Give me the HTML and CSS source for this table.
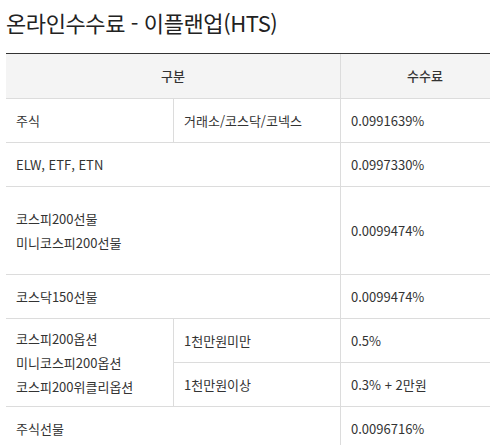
FILE: index.html
```html
<!DOCTYPE html>
<html lang="ko">
<head>
<meta charset="utf-8">
<title>온라인수수료 - 이플랜업(HTS)</title>
<link rel="stylesheet" href="styles.css">
</head>
<body>
<div class="page">
  <h1 class="title">온라인수수료 - 이플랜업(HTS)</h1>
  <div class="fee-table">
    <div class="th span2">구분</div>
    <div class="th last">수수료</div>

    <div class="td">주식</div>
    <div class="td">거래소/코스닥/코넥스</div>
    <div class="td last">0.0991639%</div>

    <div class="td span2">ELW, ETF, ETN</div>
    <div class="td last">0.0997330%</div>

    <div class="td span2 tall">코스피200선물<br>미니코스피200선물</div>
    <div class="td last tall">0.0099474%</div>

    <div class="td span2">코스닥150선물</div>
    <div class="td last">0.0099474%</div>

    <div class="td rows2">코스피200옵션<br>미니코스피200옵션<br>코스피200위클리옵션</div>
    <div class="td">1천만원미만</div>
    <div class="td last">0.5%</div>
    <div class="td">1천만원이상</div>
    <div class="td last">0.3% + 2만원</div>

    <div class="td span2">주식선물</div>
    <div class="td last">0.0096716%</div>
  </div>
</div>
</body>
</html>
```

FILE: styles.css
```css
html, body {
  margin: 0;
  padding: 0;
  background: #fff;
  overflow: hidden;
}

body {
  font-family: "Noto Sans CJK KR", "Noto Sans", sans-serif;
  color: #333;
}

.page {
  padding: 0 0 0 6px;
}

.title {
  margin: 0;
  padding: 7px 0 0;
  height: 46px;
  box-sizing: border-box;
  font-size: 22px;
  line-height: 30px;
  font-weight: 400;
  color: #222;
  letter-spacing: -0.4px;
}

.fee-table {
  display: grid;
  grid-template-columns: 168px 167px 168px;
  grid-template-rows: 45px 44px 44px 88px 44px 44px 44px 44px;
  width: 503px;
  border-top: 1px solid #333;
  margin-top: 7px;
  font-size: 13px;
  line-height: 24px;
}

.th,
.td {
  display: flex;
  align-items: center;
  box-sizing: border-box;
  border-bottom: 1px solid #dcdcdc;
  border-right: 1px solid #dcdcdc;
  padding: 0 10px;
}

.th {
  background: #f4f4f4;
  justify-content: center;
  font-weight: 500;
  color: #333;
}

.last {
  border-right: none;
}

.span2 {
  grid-column: span 2;
}

.rows2 {
  grid-row: span 2;
}
```
